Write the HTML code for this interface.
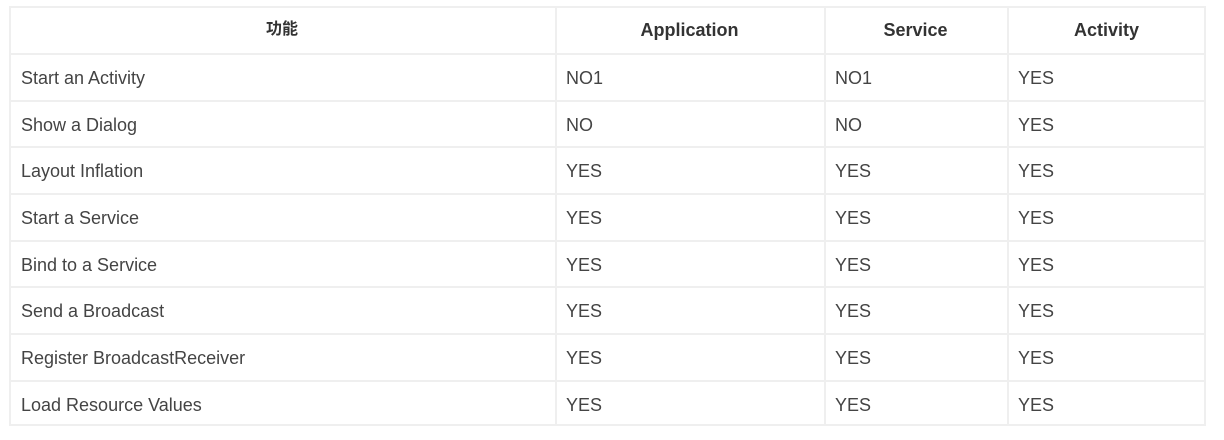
<!DOCTYPE html>
<html><head><style>
body{margin:0;background:#fff;width:1224px;height:440px;overflow:hidden;font-family:"Liberation Sans","Noto Sans CJK SC",sans-serif;color:#444}
.t{position:absolute;left:9px;top:6px;width:1197px;height:420px;border:2px solid #efefef;box-sizing:border-box}
.r{position:absolute;left:0;right:0;border-top:2px solid #efefef}
.v{position:absolute;top:0;bottom:0;border-left:2px solid #efefef}
.c{position:absolute;font-size:18px;line-height:20px}
.h{position:absolute;font-size:18px;font-weight:bold;color:#333;text-align:center;line-height:20px}
</style></head><body>
<div class="t">
<div class="v" style="left:544px"></div><div class="v" style="left:813px"></div><div class="v" style="left:996px"></div>
<div class="r" style="top:45px"></div><div class="r" style="top:92px"></div><div class="r" style="top:138px"></div><div class="r" style="top:185px"></div><div class="r" style="top:232px"></div><div class="r" style="top:278px"></div><div class="r" style="top:325px"></div><div class="r" style="top:372px"></div>
</div>
<div class="h" style="left:9px;width:546px;top:20px;font-size:16px">功能</div>
<div class="h" style="left:555px;width:269px;top:20px">Application</div>
<div class="h" style="left:824px;width:183px;top:20px">Service</div>
<div class="h" style="left:1007px;width:199px;top:20px">Activity</div>
<div class="c" style="left:21px;top:68px">Start an Activity</div><div class="c" style="left:566px;top:68px">NO1</div><div class="c" style="left:835px;top:68px">NO1</div><div class="c" style="left:1018px;top:68px">YES</div>
<div class="c" style="left:21px;top:115px">Show a Dialog</div><div class="c" style="left:566px;top:115px">NO</div><div class="c" style="left:835px;top:115px">NO</div><div class="c" style="left:1018px;top:115px">YES</div>
<div class="c" style="left:21px;top:161px">Layout Inflation</div><div class="c" style="left:566px;top:161px">YES</div><div class="c" style="left:835px;top:161px">YES</div><div class="c" style="left:1018px;top:161px">YES</div>
<div class="c" style="left:21px;top:208px">Start a Service</div><div class="c" style="left:566px;top:208px">YES</div><div class="c" style="left:835px;top:208px">YES</div><div class="c" style="left:1018px;top:208px">YES</div>
<div class="c" style="left:21px;top:255px">Bind to a Service</div><div class="c" style="left:566px;top:255px">YES</div><div class="c" style="left:835px;top:255px">YES</div><div class="c" style="left:1018px;top:255px">YES</div>
<div class="c" style="left:21px;top:301px">Send a Broadcast</div><div class="c" style="left:566px;top:301px">YES</div><div class="c" style="left:835px;top:301px">YES</div><div class="c" style="left:1018px;top:301px">YES</div>
<div class="c" style="left:21px;top:348px">Register BroadcastReceiver</div><div class="c" style="left:566px;top:348px">YES</div><div class="c" style="left:835px;top:348px">YES</div><div class="c" style="left:1018px;top:348px">YES</div>
<div class="c" style="left:21px;top:395px">Load Resource Values</div><div class="c" style="left:566px;top:395px">YES</div><div class="c" style="left:835px;top:395px">YES</div><div class="c" style="left:1018px;top:395px">YES</div>
</body></html>
